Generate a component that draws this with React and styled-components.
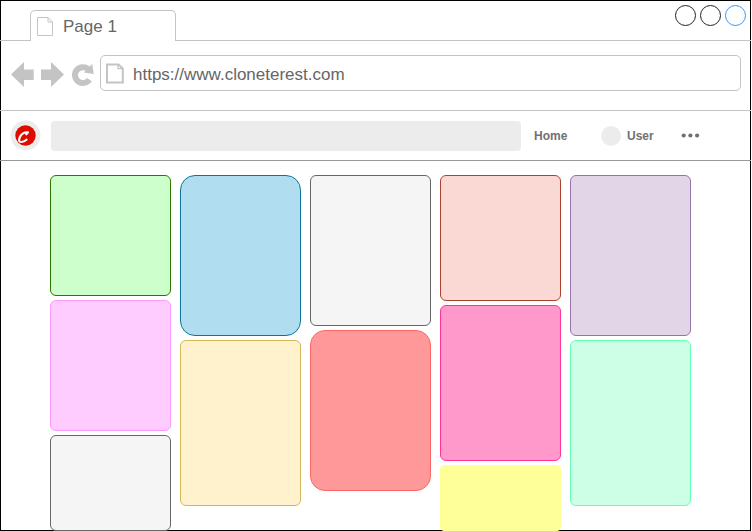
import React from 'react';
import styled, { createGlobalStyle } from 'styled-components';

const GlobalStyle = createGlobalStyle`
  * { box-sizing: border-box; }
  html, body { margin: 0; background: #fff; overflow: hidden; }
  body { font-family: Helvetica, "Liberation Sans", Arial, sans-serif; }
`;

const BrowserWindow = styled.div`
  width: 751px;
  height: 531px;
  display: flex;
  flex-direction: column;
  overflow: hidden;
  box-shadow: inset 0 0 0 1px #000;
`;

const TabStrip = styled.div`
  display: flex;
  align-items: flex-end;
  height: 41px;
  flex: none;
`;

const StripLead = styled.div`
  width: 30px;
  border-bottom: 1px solid #c4c4c4;
`;

const StripRest = styled.div`
  flex: 1;
  height: 41px;
  display: flex;
  justify-content: flex-end;
  gap: 4px;
  padding: 5px 5px 0 0;
  border-bottom: 1px solid #c4c4c4;
`;

const Tab = styled.div`
  width: 146px;
  height: 31px;
  display: flex;
  align-items: flex-start;
  gap: 10px;
  padding: 6px 0 0 6px;
  border: 1px solid #c4c4c4;
  border-bottom: 0;
  border-radius: 5px 5px 0 0;
`;

const TabTitle = styled.span`
  font-size: 17px;
  line-height: 20px;
  color: #666;
`;

const WindowButton = styled.span`
  width: 21px;
  height: 21px;
  border: 1px solid ${(p) => p.$color};
  border-radius: 50%;
`;

const Toolbar = styled.div`
  display: flex;
  align-items: flex-start;
  height: 70px;
  flex: none;
  padding: 14px 10px 0 11px;
  border-bottom: 1px solid #c4c4c4;
`;

const NavIcons = styled.div`
  display: flex;
  width: 89px;
  padding-top: 6px;
  gap: 7px;
`;

const AddressBar = styled.div`
  flex: 1;
  height: 36px;
  display: flex;
  align-items: center;
  gap: 9px;
  padding-left: 5px;
  border: 1px solid #c4c4c4;
  border-radius: 5px;
`;

const Url = styled.span`
  font-size: 17px;
  line-height: 20px;
  margin-top: 3px;
  color: #666;
`;

const Icon = styled.svg`
  display: block;
  flex: none;
  overflow: visible;
`;

const SiteHeader = styled.header`
  display: flex;
  align-items: center;
  height: 50px;
  flex: none;
  padding-left: 10px;
  border-bottom: 1px solid #999;
`;

const SearchField = styled.div`
  width: 470px;
  height: 30px;
  margin: 0 13px 0 10px;
  border-radius: 4px;
  background: #ececec;
`;

const NavLabel = styled.span`
  width: ${(p) => p.$width}px;
  font-size: 12px;
  font-weight: bold;
  line-height: 14px;
  margin-top: 1px;
  color: #717171;
`;

const Avatar = styled.span`
  width: 20px;
  height: 20px;
  margin-right: 6px;
  border-radius: 50%;
  background: #ececec;
`;

const Board = styled.main`
  flex: 1;
  min-height: 0;
  display: flex;
  gap: 9px;
  padding: 14px 0 0 50px;
`;

const Column = styled.div`
  width: 121px;
  display: flex;
  flex-direction: column;
  gap: 4px;
`;

const Pin = styled.div`
  flex: none;
  height: ${(p) => p.$height}px;
  border: 1px solid ${(p) => p.$line};
  border-radius: ${(p) => p.$radius}px;
  background: ${(p) => p.$fill};
`;

const columns = [
  [
    { height: 121, fill: '#ccffcc', line: '#2d7600' },
    { height: 131, fill: '#ffccff', line: '#ff99ff' },
    { height: 96, fill: '#f5f5f5', line: '#666666' },
  ],
  [
    { height: 161, fill: '#b1ddf0', line: '#10739e', radius: 15 },
    { height: 166, fill: '#fff2cc', line: '#d6b656' },
  ],
  [
    { height: 151, fill: '#f5f5f5', line: '#666666' },
    { height: 161, fill: '#ff9999', line: '#ff6666', radius: 15 },
  ],
  [
    { height: 126, fill: '#fad9d5', line: '#ae4132' },
    { height: 156, fill: '#ff99cc', line: '#ff3399' },
    { height: 66, fill: '#ffff99', line: '#ffff99', radius: 4 },
  ],
  [
    { height: 161, fill: '#e1d5e7', line: '#9673a6' },
    { height: 166, fill: '#ccffe6', line: '#66ffb3' },
  ],
];

function TabPageIcon() {
  return (
    <Icon width="16" height="19" viewBox="0 0 16 19" fill="none" stroke="#c4c4c4">
      <path d="M.5.5H11L15.500 5V18.500H.5ZM11 .5V5h4.500" />
    </Icon>
  );
}

function AddressPageIcon() {
  return (
    <Icon width="18" height="20" viewBox="0 0 18 20" fill="none" stroke="#c4c4c4">
      <path strokeWidth="2" d="M1 1.500H12.500L16.800 5.500V19.500H1Z" />
      <path strokeWidth="1.300" d="M12 1.500V5.700H17" />
    </Icon>
  );
}

function BackIcon() {
  return (
    <Icon width="23" height="26" viewBox="0 0 23 26" fill="#c4c4c4">
      <path d="M0 13.500 13 1V8.500H22.700V19H13V26Z" />
    </Icon>
  );
}

function ForwardIcon() {
  return (
    <Icon width="23" height="26" viewBox="0 0 23 26" fill="#c4c4c4">
      <path d="M23 13.500 10 1V8.500H0V19H10V26Z" />
    </Icon>
  );
}

function ReloadIcon() {
  return (
    <Icon width="22" height="26" viewBox="0 0 22 26">
      <path d="M17.500 8.500A7.900 7.900 0 1 0 18.400 18.600" fill="none" stroke="#c4c4c4" strokeWidth="6" />
      <path d="M21.200 3 22.800 13 12.900 11.600Z" fill="#c4c4c4" />
    </Icon>
  );
}

function Logo() {
  return (
    <Icon width="31" height="31" viewBox="0 0 31 31">
      <circle cx="15.500" cy="15.500" r="15" fill="#ececec" />
      <circle cx="15.500" cy="15.500" r="10.200" fill="#dc0d00" />
      <path d="M16.300 14.300L18 12.300C14.500 11.800 11 14.200 9.700 17.500C8.500 20.500 9 22.200 11.300 22C13.300 21.800 15 21 16.500 19.700" fill="none" stroke="#fff" strokeWidth="2.100" strokeLinecap="round" strokeLinejoin="round" />
    </Icon>
  );
}

function MoreIcon() {
  return (
    <Icon width="20" height="5" viewBox="0 0 20 5" fill="#717171">
      <circle cx="2.700" cy="2.500" r="2.100" />
      <circle cx="9.400" cy="2.500" r="2.100" />
      <circle cx="16.100" cy="2.500" r="2.100" />
    </Icon>
  );
}

export default function App() {
  return (
    <>
      <GlobalStyle />
      <BrowserWindow>
        <TabStrip>
          <StripLead />
          <Tab>
            <TabPageIcon />
            <TabTitle>Page 1</TabTitle>
          </Tab>
          <StripRest>
            <WindowButton $color="#222" />
            <WindowButton $color="#222" />
            <WindowButton $color="#3399ff" />
          </StripRest>
        </TabStrip>
        <Toolbar>
          <NavIcons>
            <BackIcon />
            <ForwardIcon />
            <ReloadIcon />
          </NavIcons>
          <AddressBar>
            <AddressPageIcon />
            <Url>https://www.cloneterest.com</Url>
          </AddressBar>
        </Toolbar>
        <SiteHeader>
          <Logo />
          <SearchField />
          <NavLabel $width={67}>Home</NavLabel>
          <Avatar />
          <NavLabel $width={54}>User</NavLabel>
          <MoreIcon />
        </SiteHeader>
        <Board>
          {columns.map((pins, i) => (
            <Column key={i}>
              {pins.map((pin, j) => (
                <Pin key={j} $height={pin.height} $fill={pin.fill} $line={pin.line} $radius={pin.radius ?? 6} />
              ))}
            </Column>
          ))}
        </Board>
      </BrowserWindow>
    </>
  );
}
